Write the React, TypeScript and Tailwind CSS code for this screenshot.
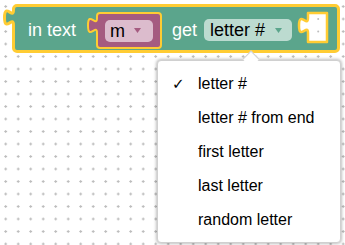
import React from 'react';

const GREEN = '#5ba58c';
const PURPLE = '#a55b80';
const YELLOW = '#ffcc33';

// puzzle tab on the left edge of a block, edge line at x
function LeftTab({ x, fill, strokeWidth }: { x: number; fill: string; strokeWidth: number }) {
  const bump = `M${x},0 c 0,10 -9,-8 -9,7.5 s 9,-2.5 9,7.5`;
  return (
    <svg width={x + 4} height={16} className="overflow-visible" fill="none">
      <path d={`${bump} L${x + 4},15 L${x + 4},0 Z`} fill={fill} />
      <path d={bump} stroke={YELLOW} strokeWidth={strokeWidth} />
    </svg>
  );
}

function Arrow({ color }: { color: string }) {
  return (
    <svg width="7" height="5" viewBox="0 0 7 5">
      <path d="M0,0 H7 L3.5,5 Z" fill={color} />
    </svg>
  );
}

const options = ['letter #', 'letter # from end', 'first letter', 'last letter', 'random letter'];

export default function App() {
  return (
    <div className="relative w-[345px] h-[245px] overflow-hidden bg-white bg-[radial-gradient(circle,#bdbdbd_1px,transparent_1.4px)] bg-size-[12.5px_12.5px] bg-position-[-0.55px_0.25px] pt-[4px] pl-[12px] font-['Liberation_Sans',Arial,sans-serif]">
      {/* text block */}
      <div className="relative w-[328px] h-[49px] border-[3px] border-[#ffcc33] rounded-[5px] bg-[#5ba58c] flex items-start pl-[13px]">
        <div className="absolute left-[-12px] top-[3px]">
          <LeftTab x={10.5} fill={GREEN} strokeWidth={3} />
        </div>
        <span className="mt-[12px] h-[22px] leading-[22px] text-[18px] text-white whitespace-nowrap">in text</span>

        {/* variable block */}
        <div className="relative ml-[20px] mt-[5px] w-[66px] h-[37px] border-2 border-[#ffcc33] rounded-[4px] bg-[#a55b80] flex items-center pl-[7px]">
          <div className="absolute left-[-12px] top-[4px]">
            <LeftTab x={11} fill={PURPLE} strokeWidth={2} />
          </div>
          <div className="w-[48px] h-[22px] rounded-[5px] bg-[#dcbccd] flex items-center pl-[5px]">
            <span className="text-[18px] leading-[22px] text-black">m</span>
            <span className="ml-[9px] flex items-center">
              <Arrow color={PURPLE} />
            </span>
          </div>
        </div>

        <span className="ml-[10px] mt-[12px] h-[22px] leading-[22px] text-[18px] text-white">get</span>

        <div className="ml-[7px] mt-[12px] w-[88px] h-[22px] rounded-[5px] bg-[#bcdbd0] flex items-center pl-[6px]">
          <span className="text-[18px] leading-[22px] text-black whitespace-nowrap">letter #</span>
          <span className="ml-[10px] flex items-center">
            <Arrow color={GREEN} />
          </span>
        </div>

        {/* empty input socket */}
        <svg className="ml-[4px] mt-[4px] shrink-0" width="33" height="33" viewBox="0 0 33 33">
          <path
            d="M12,2 H31 V31 H12 V22 c 0,-10 -9,8 -9,-7.5 s 9,2.5 9,-7.5 Z"
            fill="#fff"
            stroke={YELLOW}
            strokeWidth="2.5"
            strokeLinejoin="round"
          />
          <circle cx="22.2" cy="8" r="1" fill="#bdbdbd" />
          <circle cx="22.2" cy="20.5" r="1" fill="#bdbdbd" />
        </svg>
      </div>

      {/* dropdown menu */}
      <div className="absolute left-[157px] top-[60px] w-[184px] h-[183px] bg-white rounded-[4px] border border-[#d0d0d0] shadow-[0_0_3px_1px_rgba(0,0,0,0.25)] py-[6px]">
        <div className="absolute left-[87px] top-[-8px] w-[12px] h-[12px] rotate-45 bg-white border-t border-l border-[#d0d0d0]" />
        {options.map((o, i) => (
          <div key={o} className="relative flex items-center h-[34px] pl-[14px] text-[16px] text-black">
            <span className="w-[26px] font-['DejaVu_Sans',sans-serif] text-[15px]">{i === 0 ? '✓' : ''}</span>
            <span className="whitespace-nowrap">{o}</span>
          </div>
        ))}
      </div>
    </div>
  );
}
